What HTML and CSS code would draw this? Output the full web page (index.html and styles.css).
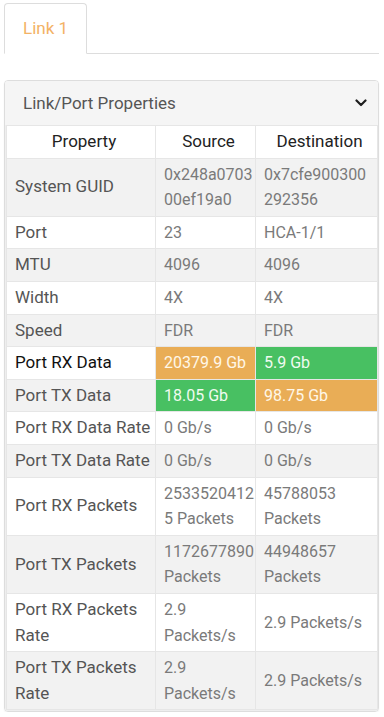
FILE: index.html
```html
<!DOCTYPE html>
<html lang="en">
<head>
    <meta charset="UTF-8">
    <meta name="viewport" content="width=device-width, initial-scale=1.0">
    <title>Link 1 - Link/Port Properties</title>
    <link rel="stylesheet" href="styles.css">
</head>
<body>
    <div class="page">
        <ul class="tabs">
            <li class="tab active">Link 1</li>
        </ul>

        <div class="panel">
            <div class="panel-heading">
                <span class="panel-title">Link/Port Properties</span>
                <svg class="chevron" width="12" height="8" viewBox="0 0 12 8">
                    <path d="M1.5 1.5 L6 6 L10.5 1.5" fill="none" stroke="#1e1e1e" stroke-width="2.2" stroke-linecap="round" stroke-linejoin="round"/>
                </svg>
            </div>
            <div class="panel-body">
                <table class="props">
                    <colgroup>
                        <col class="col-prop">
                        <col class="col-src">
                        <col class="col-dst">
                    </colgroup>
                    <thead>
                        <tr><th>Property</th><th>Source</th><th>Destination</th></tr>
                    </thead>
                    <tbody>
                        <tr><td>System GUID</td><td class="val">0x248a070300ef19a0</td><td class="val">0x7cfe900300292356</td></tr>
                        <tr><td>Port</td><td class="val">23</td><td class="val">HCA-1/1</td></tr>
                        <tr><td>MTU</td><td class="val">4096</td><td class="val">4096</td></tr>
                        <tr><td>Width</td><td class="val">4X</td><td class="val">4X</td></tr>
                        <tr><td>Speed</td><td class="val">FDR</td><td class="val">FDR</td></tr>
                        <tr class="highlight"><td>Port RX Data</td><td class="val high">20379.9 Gb</td><td class="val low">5.9 Gb</td></tr>
                        <tr><td>Port TX Data</td><td class="val low">18.05 Gb</td><td class="val high">98.75 Gb</td></tr>
                        <tr><td>Port RX Data Rate</td><td class="val">0 Gb/s</td><td class="val">0 Gb/s</td></tr>
                        <tr><td>Port TX Data Rate</td><td class="val">0 Gb/s</td><td class="val">0 Gb/s</td></tr>
                        <tr><td>Port RX Packets</td><td class="val">25335204125 Packets</td><td class="val">45788053 Packets</td></tr>
                        <tr><td>Port TX Packets</td><td class="val">1172677890 Packets</td><td class="val">44948657 Packets</td></tr>
                        <tr><td>Port RX Packets Rate</td><td class="val">2.9 Packets/s</td><td class="val">2.9 Packets/s</td></tr>
                        <tr><td>Port TX Packets Rate</td><td class="val">2.9 Packets/s</td><td class="val">2.9 Packets/s</td></tr>
                    </tbody>
                </table>
            </div>
        </div>
    </div>
</body>
</html>
```

FILE: styles.css
```css
:root {
    --border: #dddddd;
    --cell-border: #e6e6e6;
    --stripe: #f2f2f2;
    --accent: #f3b265;
    --high: #e9ad56;
    --low: #48c062;
}

* {
    margin: 0;
    padding: 0;
    box-sizing: border-box;
}

body {
    font-family: Roboto, 'Liberation Sans', sans-serif;
    font-size: 17px;
    color: #555;
    background: #fff;
}

.page {
    padding: 3px 5px 0 4px;
}

.tabs {
    list-style: none;
    display: flex;
    border-bottom: 1px solid var(--border);
}

.tab {
    margin-bottom: -1px;
    padding: 13px 18px 14px;
    line-height: 22px;
    border: 1px solid transparent;
    border-radius: 4px 4px 0 0;
    color: var(--accent);
}

.tab.active {
    border-color: var(--border);
    border-bottom-color: #fff;
    background: #fff;
}

.panel {
    margin-top: 26px;
    border: 1px solid var(--border);
    border-radius: 4px;
    box-shadow: 0 1px 2px rgba(0, 0, 0, 0.06);
    overflow: hidden;
}

.panel-heading {
    display: flex;
    align-items: center;
    justify-content: space-between;
    padding: 10px 11px 10px 18px;
    line-height: 24px;
    background: #f5f5f5;
    color: #555;
}

.chevron {
    display: block;
}

.panel-body {
    padding: 0 1px 1px;
    background: #eeeeee;
}

.props {
    width: 100%;
    border-collapse: collapse;
    table-layout: fixed;
    line-height: 25.6px;
}

.col-prop { width: 149px; }
.col-src { width: 100px; }
.col-dst { width: 122px; }

.props th,
.props td {
    padding: 3px 2px 3px 8px;
    border: 1px solid var(--cell-border);
    text-align: left;
    vertical-align: middle;
    background: #fff;
}

.props th {
    text-align: center;
    font-size: 17px;
    font-weight: 400;
    color: #222;
}

.props tbody tr:nth-child(odd) td {
    background: var(--stripe);
}

.props td.val {
    padding-right: 0;
    font-size: 16px;
    color: #7a7a7a;
    overflow-wrap: anywhere;
}

.props td.val:last-child {
    padding-right: 6px;
}

.props tr.highlight td:first-child {
    color: #111;
}

.props td.high {
    background: var(--high) !important;
    color: #fff7e8;
}

.props td.low {
    background: var(--low) !important;
    color: #f0fbf0;
}
```
